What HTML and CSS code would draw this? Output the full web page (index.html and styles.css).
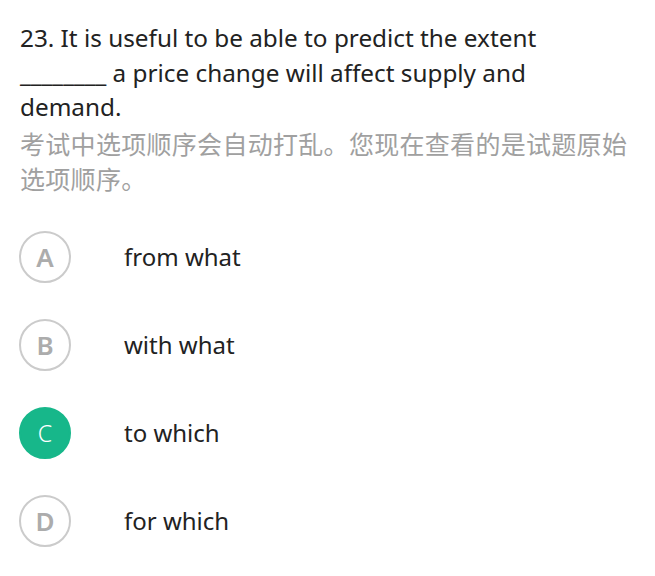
FILE: index.html
```html
<!DOCTYPE html>
<html>
<head>
<meta charset="utf-8">
<link rel="stylesheet" href="styles.css">
</head>
<body>
<div class="page">
  <div class="question">23. It is useful to be able to predict the extent ________ a price change will affect supply and demand.</div>
  <div class="note">考试中选项顺序会自动打乱。您现在查看的是试题原始选项顺序。</div>
  <div class="options">
    <div class="option"><span class="badge">A</span><span class="text">from what</span></div>
    <div class="option"><span class="badge">B</span><span class="text">with what</span></div>
    <div class="option"><span class="badge selected">C</span><span class="text">to which</span></div>
    <div class="option"><span class="badge">D</span><span class="text">for which</span></div>
  </div>
</div>
</body>
</html>
```
FILE: styles.css
```css
html, body {
  margin: 0;
  padding: 0;
  background: #fff;
}
.page {
  padding: 21px 20px 0 20px;
  font-family: "Noto Sans", "Noto Sans CJK SC", sans-serif;
}
.question {
  font-size: 24.3px;
  line-height: 34.5px;
  color: #222;
  width: 580px;
}
.note {
  font-family: "Noto Sans CJK SC", sans-serif;
  font-size: 25px;
  letter-spacing: 0.3px;
  line-height: 35px;
  color: #a0a0a0;
  margin-top: 1px;
}
.options {
  display: flex;
  flex-direction: column;
  gap: 36px;
  margin-top: 35px;
}
.option {
  display: flex;
  align-items: center;
  height: 52px;
}
.badge {
  box-sizing: border-box;
  width: 52px;
  height: 52px;
  border-radius: 50%;
  border: 2px solid #cbcbcb;
  color: #acacac;
  font-size: 26px;
  font-weight: 600;
  display: flex;
  align-items: center;
  justify-content: center;
  margin-left: -1px;
}
.badge.selected {
  background: #17b78a;
  border-color: #17b78a;
  color: #fff;
  font-size: 23px;
  font-weight: 300;
}
.text {
  margin-left: 53px;
  font-size: 24px;
  color: #222;
}
```
